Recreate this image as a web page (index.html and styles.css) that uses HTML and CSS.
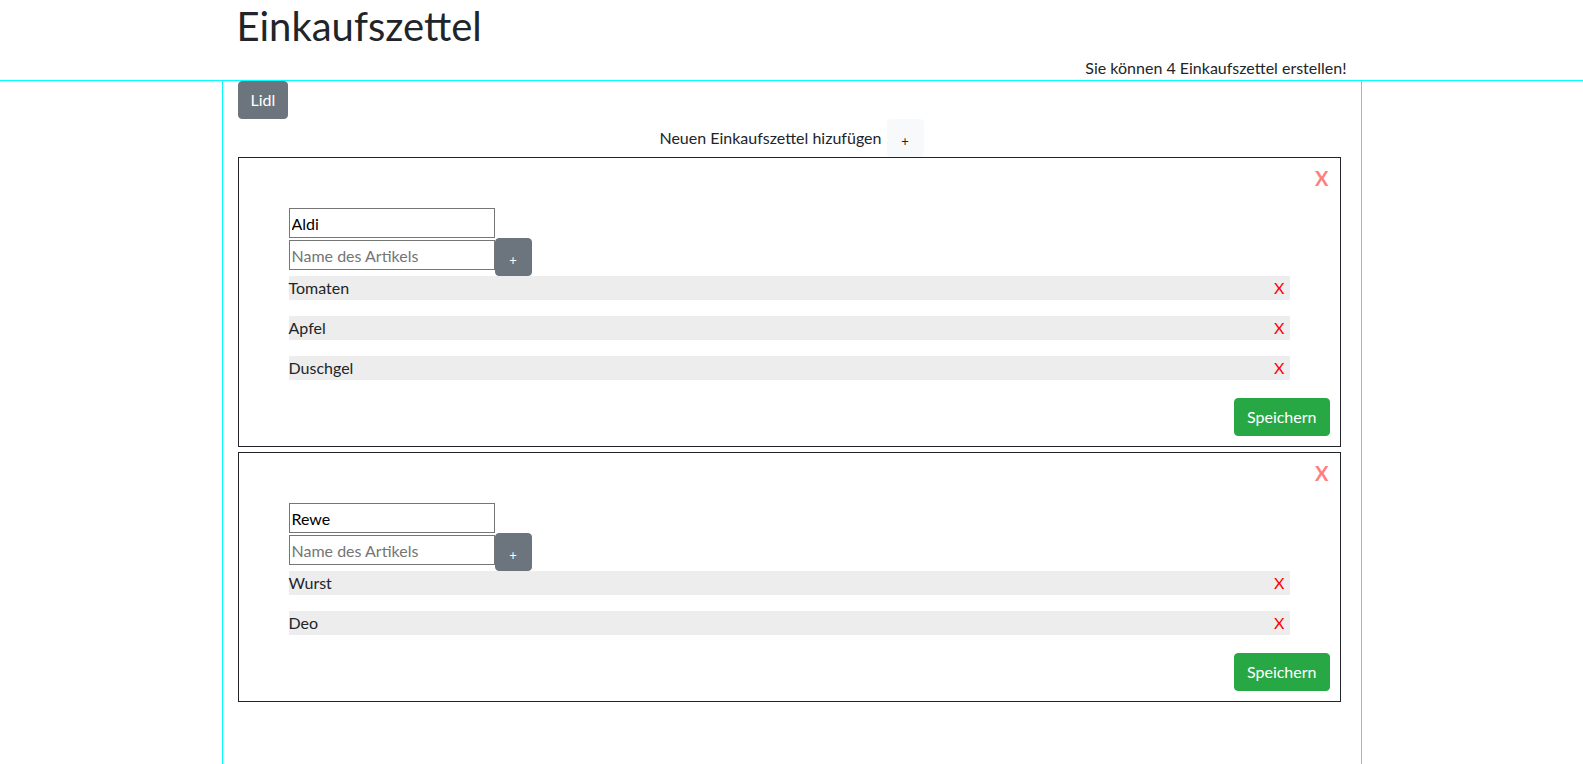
FILE: index.html
```html
<!DOCTYPE html>
<html lang="de">
<head>
<meta charset="utf-8">
<title>Einkaufszettel</title>
<link rel="stylesheet" href="styles.css">
</head>
<body>
<header class="top">
  <div class="container head-inner">
    <h1 class="title">Einkaufszettel</h1>
    <p class="limit">Sie können 4 Einkaufszettel erstellen!</p>
  </div>
</header>
<main class="container main">
  <div class="tabs">
    <button class="btn btn-secondary">Lidl</button>
  </div>
  <div class="add-row">
    <span class="add-label">Neuen Einkaufszettel hizufügen</span>
    <button class="btn btn-light btn-plus">+</button>
  </div>
  <div class="cards">
    <section class="list-card">
      <div class="card-head"><span class="close">X</span></div>
      <div class="card-body">
        <input class="field name-field" type="text" value="Aldi">
        <div class="item-form">
          <input class="field item-field" type="text" placeholder="Name des Artikels">
          <button class="btn btn-secondary btn-plus">+</button>
        </div>
        <ul class="items">
          <li class="item"><span>Tomaten</span><span class="remove">X</span></li>
          <li class="item"><span>Apfel</span><span class="remove">X</span></li>
          <li class="item"><span>Duschgel</span><span class="remove">X</span></li>
        </ul>
      </div>
      <div class="card-foot"><button class="btn btn-success">Speichern</button></div>
    </section>
    <section class="list-card">
      <div class="card-head"><span class="close">X</span></div>
      <div class="card-body">
        <input class="field name-field" type="text" value="Rewe">
        <div class="item-form">
          <input class="field item-field" type="text" placeholder="Name des Artikels">
          <button class="btn btn-secondary btn-plus">+</button>
        </div>
        <ul class="items">
          <li class="item"><span>Wurst</span><span class="remove">X</span></li>
          <li class="item"><span>Deo</span><span class="remove">X</span></li>
        </ul>
      </div>
      <div class="card-foot"><button class="btn btn-success">Speichern</button></div>
    </section>
  </div>
</main>
</body>
</html>
```

FILE: styles.css
```css
* { box-sizing: border-box; }

html, body {
  margin: 0;
  padding: 0;
}

body {
  font-family: Lato, "Noto Sans", "Liberation Sans", sans-serif;
  font-size: 16px;
  line-height: 24px;
  color: #212529;
  background: #fff;
}

.container {
  width: 1140px;
  margin: 0 auto;
  padding: 0 15px;
}

.top {
  border-bottom: 1px solid #00ffff;
}

.title {
  margin: 0 0 6px 0;
  padding-top: 2px;
  font-size: 40px;
  line-height: 48px;
  font-weight: 400;
}

.limit {
  margin: 0;
  text-align: right;
}

.main {
  border-left: 1px solid #00ffff;
  border-right: 1px solid #00ffff;
  min-height: calc(100vh - 81px);
  padding-bottom: 20px;
}

.btn {
  display: inline-block;
  font-family: inherit;
  font-size: 16px;
  line-height: 24px;
  padding: 6px 12px;
  border: 1px solid transparent;
  border-radius: 4px;
  cursor: pointer;
}

.btn-secondary {
  background: #6c757d;
  border-color: #6c757d;
  color: #fff;
}

.btn-light {
  background: #f8f9fa;
  border-color: #f8f9fa;
  color: #212529;
}

.btn-success {
  background: #28a745;
  border-color: #28a745;
  color: #fff;
}

.btn-plus {
  width: 37px;
  height: 38px;
  padding: 0;
  font-size: 13px;
  line-height: 36px;
  padding-top: 3px;
}

.tabs {
  display: flex;
}

.add-row {
  text-align: center;
  height: 38px;
}

.add-label {
  vertical-align: middle;
}

.add-row .btn-plus {
  vertical-align: middle;
  margin-left: 1px;
}

.cards {
  display: flex;
  flex-direction: column;
  gap: 5px;
  margin-right: 5px;
}

.list-card {
  border: 1px solid #212529;
  padding: 10px;
}

.card-head {
  height: 40px;
  display: flex;
  justify-content: flex-end;
  align-items: flex-start;
}

.close {
  font-size: 20px;
  line-height: 20px;
  font-weight: 700;
  color: #ff7f7f;
  margin-right: 1px;
}

.card-body {
  display: flow-root;
  padding: 0 40px;
}

.field {
  display: block;
  width: 206px;
  height: 30px;
  border: 1px solid #767676;
  border-radius: 0;
  padding: 0 2px;
  font-family: inherit;
  font-size: 16px;
  color: #000;
  background: #fff;
  outline: none;
}

.field::placeholder {
  color: #757575;
}

.item-form {
  display: flex;
  align-items: flex-start;
}

.item-field {
  margin-top: 2px;
}

.items {
  list-style: none;
  margin: 0;
  padding: 0;
}

.item {
  display: flex;
  justify-content: space-between;
  height: 24px;
  line-height: 24px;
  background: #ededed;
  margin-bottom: 16px;
}

.remove {
  color: #ff0000;
  padding-right: 5px;
}

.card-foot {
  display: flex;
  justify-content: flex-end;
  padding-top: 2px;
}
```
